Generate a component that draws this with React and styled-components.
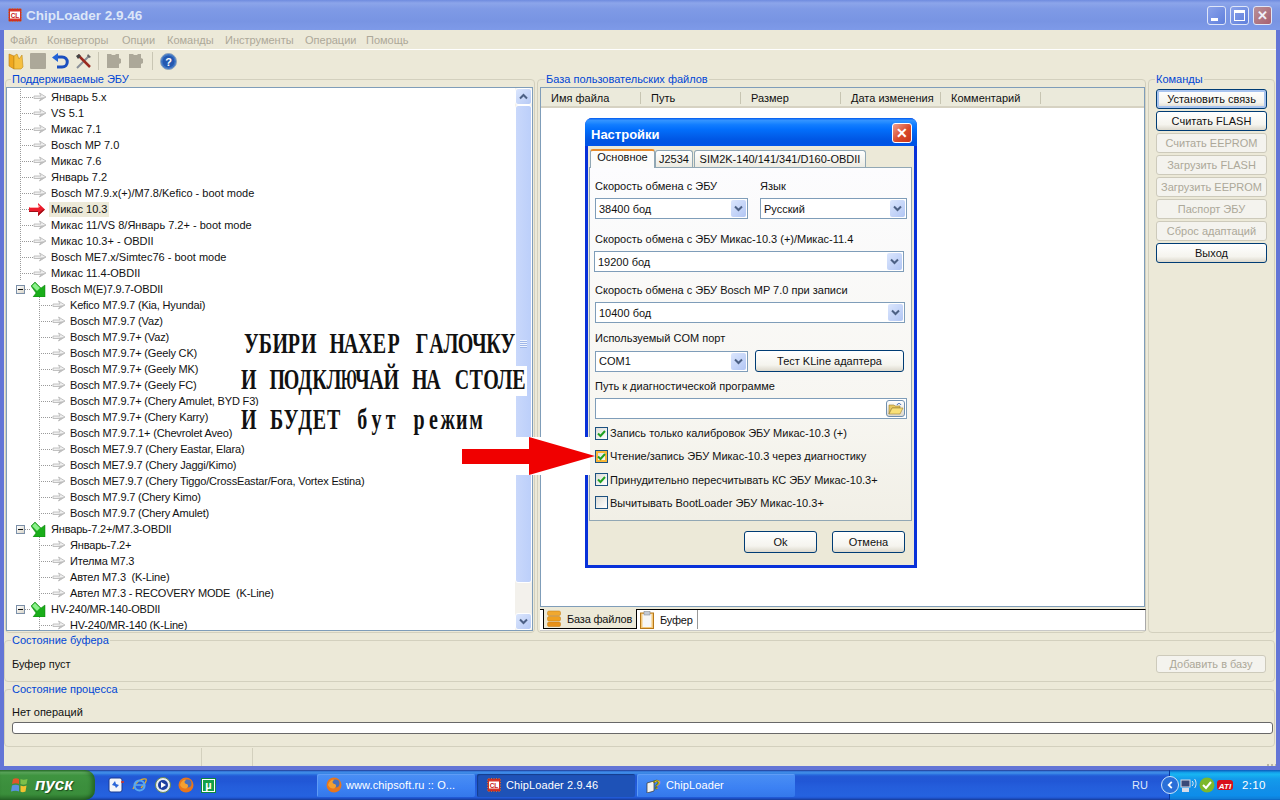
import React from "react";
import styled, { createGlobalStyle } from "styled-components";

const FONT = `"Liberation Sans", Arial, sans-serif`;

const TREE = [
  { t: "Январь 5.x" },
  { t: "VS 5.1" },
  { t: "Микас 7.1" },
  { t: "Bosch MP 7.0" },
  { t: "Микас 7.6" },
  { t: "Январь 7.2" },
  { t: "Bosch M7.9.x(+)/M7.8/Kefico - boot mode" },
  { t: "Микас 10.3", selected: true },
  { t: "Микас 11/VS 8/Январь 7.2+ - boot mode" },
  { t: "Микас 10.3+ - OBDII" },
  { t: "Bosch ME7.x/Simtec76 - boot mode" },
  { t: "Микас 11.4-OBDII" },
  { t: "Bosch M(E)7.9.7-OBDII", group: true },
  { t: "Kefico M7.9.7 (Kia, Hyundai)", child: true },
  { t: "Bosch M7.9.7 (Vaz)", child: true },
  { t: "Bosch M7.9.7+ (Vaz)", child: true },
  { t: "Bosch M7.9.7+ (Geely CK)", child: true },
  { t: "Bosch M7.9.7+ (Geely MK)", child: true },
  { t: "Bosch M7.9.7+ (Geely FC)", child: true },
  { t: "Bosch M7.9.7+ (Chery Amulet, BYD F3)", child: true },
  { t: "Bosch M7.9.7+ (Chery Karry)", child: true },
  { t: "Bosch M7.9.7.1+ (Chevrolet Aveo)", child: true },
  { t: "Bosch ME7.9.7 (Chery Eastar, Elara)", child: true },
  { t: "Bosch ME7.9.7 (Chery Jaggi/Kimo)", child: true },
  { t: "Bosch ME7.9.7 (Chery Tiggo/CrossEastar/Fora, Vortex Estina)", child: true },
  { t: "Bosch M7.9.7 (Chery Kimo)", child: true },
  { t: "Bosch M7.9.7 (Chery Amulet)", child: true },
  { t: "Январь-7.2+/M7.3-OBDII", group: true },
  { t: "Январь-7.2+", child: true },
  { t: "Ителма M7.3", child: true },
  { t: "Автел M7.3  (K-Line)", child: true },
  { t: "Автел M7.3 - RECOVERY MODE  (K-Line)", child: true },
  { t: "HV-240/MR-140-OBDII", group: true },
  { t: "HV-240/MR-140 (K-Line)", child: true },
];

const MENU = [
  ["Файл", 10],
  ["Конверторы", 47],
  ["Опции", 122],
  ["Команды", 167],
  ["Инструменты", 225],
  ["Операции", 305],
  ["Помощь", 366],
];

const COLUMNS = ["Имя файла", "Путь", "Размер", "Дата изменения", "Комментарий"];

const COMMANDS = [
  ["Установить связь", "default"],
  ["Считать FLASH", "normal"],
  ["Считать EEPROM", "disabled"],
  ["Загрузить FLASH", "disabled"],
  ["Загрузить EEPROM", "disabled"],
  ["Паспорт ЭБУ", "disabled"],
  ["Сброс адаптаций", "disabled"],
  ["Выход", "normal"],
];

const CHECKS = [
  ["Запись только калибровок ЭБУ Микас-10.3 (+)", true],
  ["Чтение/запись ЭБУ Микас-10.3 через диагностику", true, true],
  ["Принудительно пересчитывать КС ЭБУ Микас-10.3+", true],
  ["Вычитывать BootLoader ЭБУ Микас-10.3+", false],
];

const ChipIcon = ({ size = 16 }) => (
  <svg width={size} height={size} viewBox="0 0 16 16">
    <path d="M3 1v14M5.500 1v14M8 1v14M10.500 1v14M13 1v14M1 3h14M1 5.500h14M1 8h14M1 10.500h14M1 13h14" stroke="#e8863a" strokeWidth="1" />
    <rect x="2" y="2" width="12" height="12" fill="#d9362a" stroke="#a52015" strokeWidth="0.5" />
    <rect x="3" y="4.500" width="10" height="7" fill="#fff" />
    <text x="8" y="10.500" textAnchor="middle" fontFamily={FONT} fontWeight="700" fontSize="6.500" fill="#c8201a">CL</text>
  </svg>
);

const FolderTool = () => (
  <svg width="16" height="18" viewBox="0 0 16 18">
    <path d="M1 2l5 2v13l-5-3z" fill="#f0a820" stroke="#b87a10" strokeWidth="0.6" />
    <path d="M6 4l3-2 2 5 3-4 1 12-2 2H6z" fill="#f6c040" stroke="#c08a18" strokeWidth="0.6" />
  </svg>
);

const UndoIcon = () => (
  <svg width="17" height="17" viewBox="0 0 17 17">
    <path d="M5 4h5c7 0 7 10 0 10H5" fill="none" stroke="#1a4fc0" strokeWidth="3" />
    <path d="M6 0L0 4.500 6 9z" fill="#2364d8" />
  </svg>
);

const ToolsIcon = () => (
  <svg width="17" height="17" viewBox="0 0 17 17">
    <path d="M2 15L14 3" stroke="#8a8f98" strokeWidth="2" />
    <path d="M13 1l3 3-2 1-2-2z" fill="#666" />
    <path d="M3 2l12 12" stroke="#9a2a20" strokeWidth="2.500" />
    <path d="M1 3l3-2 2 2-3 3z" fill="#444" />
  </svg>
);

const GrayBlock = ({ notch }) => (
  <svg width="16" height="16" viewBox="0 0 16 16">
    {notch ? (
      <path d="M1 1h4l1 1h3l1-1h3v4l2 1v4l-2 1v4H1z" fill="#aca899" />
    ) : (
      <rect x="0" y="0" width="16" height="16" rx="1" fill="#aca899" />
    )}
  </svg>
);

const HelpIcon = () => (
  <svg width="17" height="17" viewBox="0 0 17 17">
    <circle cx="8.500" cy="8.500" r="8" fill="#3e76c6" stroke="#8fa4bd" />
    <circle cx="8.500" cy="8.500" r="6" fill="#2458b0" />
    <text x="8.500" y="12.500" textAnchor="middle" fontFamily={FONT} fontWeight="700" fontSize="11" fill="#fff">?</text>
  </svg>
);

const NodeArrow = () => (
  <svg width="15" height="12" viewBox="0 0 15 12">
    <path d="M1 5h7L6.500 2 13 6l-6.500 4L8 7.500H1z" fill="#f0f0f0" stroke="#b4b4b4" strokeWidth="0.8" />
    <path d="M1 7.500h7L6.500 10 13 6z" fill="#bdbdbd" />
  </svg>
);

const RedArrow = () => (
  <svg width="16" height="13" viewBox="0 0 16 13">
    <path d="M0 4h9V0l7 6.500L9 13V9H0z" fill="#ec1c2c" />
    <path d="M0 4h9V1.500L11 3.500 9 5H1z" fill="#ffb0b0" />
    <path d="M0 9h9v4l7-6.500-2 0L9 10.500V8H0z" fill="#a01018" />
  </svg>
);

const GreenArrow = () => (
  <svg width="15" height="15" viewBox="0 0 15 15">
    <path d="M0 4l4-4 6 6 4-3v12H2l3-4z" fill="#19ad19" stroke="#0c7a0c" strokeWidth="0.5" />
    <path d="M1 4l3-3 5 5-3 3z" fill="#8cf08c" />
  </svg>
);

const Chevron = ({ up, color = "#4d6185", size = 9 }) => (
  <svg width={size} height={size} viewBox="0 0 9 9">
    <path d={up ? "M1 6.500l3.500-3.500L8 6.500" : "M1 2.500L4.500 6 8 2.500"} fill="none" stroke={color} strokeWidth="2" />
  </svg>
);

const DbIcon = () => (
  <svg width="14" height="18" viewBox="0 0 14 18">
    <rect x="0.500" y="1" width="13" height="4.500" rx="1.500" fill="#f0a830" stroke="#c07810" strokeWidth="0.5" />
    <rect x="0.500" y="6.500" width="13" height="4.500" rx="1.500" fill="#f0a020" stroke="#c07810" strokeWidth="0.5" />
    <rect x="0.500" y="12" width="13" height="4.500" rx="1.500" fill="#e89018" stroke="#c07810" strokeWidth="0.5" />
  </svg>
);

const ClipIcon = () => (
  <svg width="14" height="18" viewBox="0 0 14 18">
    <rect x="0.500" y="2" width="13" height="15.500" fill="#f4c878" stroke="#b87818" />
    <rect x="2.500" y="3" width="9" height="13" fill="#f6f6f6" />
    <rect x="4" y="0.500" width="6" height="3.500" fill="#c4cad4" stroke="#7a808a" strokeWidth="0.5" />
  </svg>
);

const FolderOpen = () => (
  <svg width="16" height="14" viewBox="0 0 16 14">
    <path d="M1 3h5l1 1h5v2H4L1 12z" fill="#e8c860" stroke="#9a8030" strokeWidth="0.6" />
    <path d="M1 12l3-6h11l-3 6z" fill="#f8e078" stroke="#9a8030" strokeWidth="0.6" />
    <path d="M9 3c1-2 3-2 4 0" fill="none" stroke="#2458b0" strokeWidth="1" />
  </svg>
);

const CheckMark = () => (
  <svg width="9" height="9" viewBox="0 0 9 9">
    <path d="M1 4.500l2.500 2.500L8 2" fill="none" stroke="#21a121" strokeWidth="2" />
  </svg>
);

const WinFlag = () => (
  <svg width="18" height="18" viewBox="0 0 18 18">
    <path d="M2 3c2-1 4-1 6 0v5C6 7 4 7 1 8z" fill="#e0562a" />
    <path d="M9.500 3c2 1 4 1 7 0l-1 5c-2 1-4 1-6 0z" fill="#7cc04a" />
    <path d="M1 9.500c2-1 5-1 7 0v6c-2-1-5-1-8 0z" fill="#5a92e0" />
    <path d="M9.500 9.500c2 1 4 1 6 0l-1 6c-2 1-4 1-5 0z" fill="#f2c230" />
  </svg>
);

const FoxIcon = () => (
  <svg width="16" height="16" viewBox="0 0 16 16">
    <circle cx="8" cy="8" r="7.500" fill="#e8761c" />
    <circle cx="9.500" cy="6.500" r="4" fill="#4a6fb8" />
    <path d="M2 8c1-4 4-6 6-5-2 1-2 3 0 4 2 0 3 2 1 4-2 1-5 1-7-3z" fill="#f4a030" />
  </svg>
);

const QuickOne = () => (
  <svg width="16" height="16" viewBox="0 0 16 16">
    <rect x="1" y="1" width="13" height="14" rx="2" fill="#f4f6fa" stroke="#1a3a90" />
    <path d="M4 8l3-4 1 3 3 1-3 3-1-2z" fill="#2b66d8" />
    <path d="M13 5h3" stroke="#e03020" strokeWidth="1.500" />
  </svg>
);

const IeIcon = () => (
  <svg width="17" height="16" viewBox="0 0 17 16">
    <path d="M2 12C5 4 11 1 15 2c1 2-2 6-5 9" fill="none" stroke="#e8b020" strokeWidth="1.200" />
    <circle cx="8.500" cy="8.500" r="5" fill="none" stroke="#5aa8f0" strokeWidth="2.200" />
    <path d="M4 8h9" stroke="#5aa8f0" strokeWidth="1.600" />
  </svg>
);

const PlayerIcon = () => (
  <svg width="16" height="16" viewBox="0 0 16 16">
    <circle cx="8" cy="8" r="7.500" fill="#e8ecf4" stroke="#6a8a50" />
    <circle cx="8" cy="8" r="5" fill="#1c3fa0" />
    <path d="M6 5l5 3-5 3z" fill="#fff" />
  </svg>
);

const TorrentIcon = () => (
  <svg width="15" height="15" viewBox="0 0 15 15">
    <rect x="0.500" y="0.500" width="14" height="14" fill="#fff" stroke="#0d8a3c" />
    <rect x="2" y="2" width="11" height="11" fill="#14a049" />
    <text x="7.500" y="11" textAnchor="middle" fontFamily={FONT} fontWeight="700" fontSize="11" fill="#fff">µ</text>
  </svg>
);

const HelpDocIcon = () => (
  <svg width="16" height="16" viewBox="0 0 16 16">
    <path d="M1 6l7-2v10l-7 2z" fill="#f4f4f0" stroke="#333" strokeWidth="0.7" />
    <text x="11" y="12" textAnchor="middle" fontFamily={FONT} fontWeight="700" fontSize="12" fill="#f4d820" stroke="#5a4a00" strokeWidth="0.4">?</text>
  </svg>
);

const NetIcon = () => (
  <svg width="17" height="15" viewBox="0 0 17 15">
    <rect x="1" y="2" width="9" height="7" fill="#3a4a78" stroke="#d8dce8" />
    <rect x="2" y="10" width="7" height="4" fill="#d8dce8" />
    <path d="M12 3c1.500 1 1.500 4 0 5M14.500 1c2 2 2 7 0 9" fill="none" stroke="#e8e8f0" strokeWidth="1" />
  </svg>
);

const ShieldIcon = () => (
  <svg width="16" height="16" viewBox="0 0 16 16">
    <ellipse cx="8" cy="8" rx="7.500" ry="7.500" fill="#7cb82c" />
    <path d="M4 8l3 3 5-6" fill="none" stroke="#fff" strokeWidth="2" />
  </svg>
);

const AtiIcon = () => (
  <svg width="16" height="12" viewBox="0 0 16 12">
    <rect x="0" y="1" width="16" height="10" rx="3" fill="#d8101c" />
    <text x="8" y="9.500" textAnchor="middle" fontFamily={FONT} fontWeight="700" fontStyle="italic" fontSize="8" fill="#fff">ATI</text>
  </svg>
);

const Combo = ({ width, value, shift }) => (
  <ComboBox $width={width} $shift={shift}>
    <span>{value}</span>
    <ComboArrow><Chevron /></ComboArrow>
  </ComboBox>
);

const WIDE_LETTERS = "ЮЖШЩМ";

// the note on the screenshot is typewriter lettering, so every letter gets a cell of its own
const NoteWords = ({ text }) => (
  <NoteText aria-label={text}>
    {[...text].map((ch, i) => (
      <NoteCell key={i}>
        <NoteGlyph $wide={WIDE_LETTERS.includes(ch)}>{ch}</NoteGlyph>
      </NoteCell>
    ))}
  </NoteText>
);

export default function App() {
  return (
    <Page>
      <GlobalStyle />
      <AppWindow>
        <TitleBar>
          <TitleLeft>
            <ChipIcon />
            <TitleText>ChipLoader 2.9.46</TitleText>
          </TitleLeft>
          <WinButtons>
            <WinButton><MinGlyph /></WinButton>
            <WinButton><MaxGlyph /></WinButton>
            <WinButton $close>✕</WinButton>
          </WinButtons>
        </TitleBar>
        <Frame>
          <MenuBar>
            {MENU.map(([name, x]) => (
              <MenuItem key={name} $x={x}>{name}</MenuItem>
            ))}
          </MenuBar>
          <ToolBar>
            <FolderTool />
            <GrayBlock />
            <UndoIcon />
            <ToolsIcon />
            <ToolSep />
            <GrayBlock notch />
            <GrayBlock notch />
            <ToolSep $left={2} />
            <HelpIcon />
          </ToolBar>
          <TopRow>
            <Group $width={530}>
              <GroupTitle $left={5}>Поддерживаемые ЭБУ</GroupTitle>
              <TreeBox>
                <TreeList>
                  {TREE.map((node) => (
                    <TreeRow key={node.t} $child={node.child} $group={node.group}>
                      {node.group ? (
                        <>
                          <Expander />
                          <GroupDots />
                          <GreenArrow />
                        </>
                      ) : (
                        <>
                          <Branch $short={node.selected} />
                          <RowIcon $selected={node.selected}>{node.selected ? <RedArrow /> : <NodeArrow />}</RowIcon>
                        </>
                      )}
                      <RowLabel $selected={node.selected} $tight={node.child || node.group}>{node.t}</RowLabel>
                    </TreeRow>
                  ))}
                </TreeList>
                <ScrollBar>
                  <ScrollButton><Chevron up /></ScrollButton>
                  <ScrollThumb><Grip /></ScrollThumb>
                  <ScrollTrack />
                  <ScrollButton><Chevron /></ScrollButton>
                </ScrollBar>
              </TreeBox>
            </Group>
            <Group $width={609}>
              <GroupTitle $left={7}>База пользовательских файлов</GroupTitle>
              <ListBox>
                <ListHeader>
                  {COLUMNS.map((c) => (
                    <ColumnHead key={c}>{c}</ColumnHead>
                  ))}
                  <ColumnRest />
                </ListHeader>
              </ListBox>
              <PageTabs>
                <PageTab $active><DbIcon /><span>База файлов</span></PageTab>
                <PageTab><ClipIcon /><span>Буфер</span></PageTab>
              </PageTabs>
            </Group>
            <Group $width={127}>
              <GroupTitle $left={6}>Команды</GroupTitle>
              <CommandList>
                {COMMANDS.map(([label, kind]) => (
                  <XpButton key={label} $kind={kind} $width={111} $height={20}>{label}</XpButton>
                ))}
              </CommandList>
            </Group>
          </TopRow>
          <WideGroup $height={49}>
            <GroupTitle $left={6}>Состояние буфера</GroupTitle>
            <BufferRow>
              <span>Буфер пуст</span>
              <XpButton $kind="disabled" $width={110} $height={18}>Добавить в базу</XpButton>
            </BufferRow>
          </WideGroup>
          <WideGroup $height={65}>
            <GroupTitle $left={6}>Состояние процесса</GroupTitle>
            <ProcessLabel>Нет операций</ProcessLabel>
            <Progress />
          </WideGroup>
          <StatusBar>
            <StatusCell $width={198} />
            <StatusCell $width={51} />
            <StatusFill />
            <SizeGrip />
          </StatusBar>
        </Frame>
      </AppWindow>

      <Taskbar>
        <StartButton>
          <WinFlag />
          <StartText>пуск</StartText>
        </StartButton>
        <QuickLaunch>
          <QuickOne />
          <IeIcon />
          <PlayerIcon />
          <FoxIcon />
          <TorrentIcon />
        </QuickLaunch>
        <TaskButtons>
          <TaskButton><FoxIcon /><TaskText>www.chipsoft.ru :: О...</TaskText></TaskButton>
          <TaskButton $active><ChipIcon /><TaskText>ChipLoader 2.9.46</TaskText></TaskButton>
          <TaskButton><HelpDocIcon /><TaskText>ChipLoader</TaskText></TaskButton>
        </TaskButtons>
        <LangLabel>RU</LangLabel>
        <Tray>
          <TrayChevron><Chevron color="#fff" size={8} /></TrayChevron>
          <NetIcon />
          <ShieldIcon />
          <AtiIcon />
          <Clock>2:10</Clock>
        </Tray>
      </Taskbar>

      <Dialog>
        <DialogTitle>
          <DialogCaption>Настройки</DialogCaption>
          <DialogClose>✕</DialogClose>
        </DialogTitle>
        <DialogBody>
          <DialogTabs>
            <DialogTab $active $width={65}>Основное</DialogTab>
            <DialogTab $width={38}>J2534</DialogTab>
            <DialogTab $width={172}>SIM2K-140/141/341/D160-OBDII</DialogTab>
          </DialogTabs>
          <TabPanel>
            <TwoCols>
              <div>
                <FieldLabel>Скорость обмена с ЭБУ</FieldLabel>
                <Combo width={153} value="38400 бод" />
              </div>
              <div>
                <FieldLabel>Язык</FieldLabel>
                <Combo width={147} value="Русский" />
              </div>
            </TwoCols>
            <FieldLabel $top={13}>Скорость обмена с ЭБУ Микас-10.3 (+)/Микас-11.4</FieldLabel>
            <Combo width={310} value="19200 бод" shift={-1} />
            <FieldLabel $top={11}>Скорость обмена с ЭБУ Bosch MP 7.0 при записи</FieldLabel>
            <Combo width={310} value="10400 бод" />
            <FieldLabel $top={8}>Используемый COM порт</FieldLabel>
            <ComRow>
              <Combo width={153} value="COM1" />
              <XpButton $kind="normal" $width={149} $height={22}>Тест KLine адаптера</XpButton>
            </ComRow>
            <FieldLabel $top={7}>Путь к диагностической программе</FieldLabel>
            <PathEdit>
              <PathButton><FolderOpen /></PathButton>
            </PathEdit>
            <CheckList>
              {CHECKS.map(([label, on, hot]) => (
                <CheckRow key={label}>
                  <CheckBox $hot={hot}>{on && <CheckMark />}</CheckBox>
                  {label}
                </CheckRow>
              ))}
            </CheckList>
          </TabPanel>
          <DialogFooter>
            <XpButton $kind="normal" $width={73} $height={22}>Ok</XpButton>
            <XpButton $kind="normal" $width={73} $height={22}>Отмена</XpButton>
          </DialogFooter>
        </DialogBody>
      </Dialog>

      <Note>
        <NoteLine $left={3} $height={30}><NoteWords text="УБИРИ НАХЕР ГАЛОЧКУ" /></NoteLine>
        <NoteLine $left={0} $height={30} $top={6}><NoteWords text="И ПОДКЛЮЧАЙ НА СТОЛЕ" /></NoteLine>
        <NoteLine $left={0} $height={28} $top={10}><NoteWords text="И БУДЕТ бут режим" /></NoteLine>
      </Note>

      <BigArrow>
        <svg width="133" height="38" viewBox="0 0 133 38">
          <path d="M0 12h67V0l66 19-66 19V27H0z" fill="#f00000" />
        </svg>
      </BigArrow>
    </Page>
  );
}

const GlobalStyle = createGlobalStyle`
  html, body {
    margin: 0;
    padding: 0;
    background: #fff;
  }
  * { box-sizing: border-box; }
`;

const Page = styled.div`
  position: relative;
  width: 1280px;
  height: 800px;
  overflow: hidden;
  display: flex;
  flex-direction: column;
  font: 11px/14px ${FONT};
  color: #111;
  background: #ece9d8;
`;

const AppWindow = styled.div`
  height: 770px;
  display: flex;
  flex-direction: column;
`;

const TitleBar = styled.div`
  height: 30px;
  flex: none;
  display: flex;
  align-items: center;
  justify-content: space-between;
  padding: 0 8px 0 7px;
  background: linear-gradient(#6f8bdf 0, #8ca5ea 10%, #7f9ae6 30%, #7894e3 70%, #7e9ae8 100%);
`;

const TitleLeft = styled.div`
  display: flex;
  align-items: center;
  gap: 3px;
`;

const TitleText = styled.span`
  font: bold 13.500px ${FONT};
  color: #dce6f8;
`;

const WinButtons = styled.div`
  display: flex;
  gap: 4px;
`;

const WinButton = styled.div`
  width: 19px;
  height: 19px;
  display: flex;
  align-items: center;
  justify-content: center;
  border: 1px solid #dfe6f8;
  border-radius: 3px;
  color: #f0f0f8;
  font: bold 13px ${FONT};
  background: ${(p) => (p.$close ? "linear-gradient(135deg, #b89098, #a86070)" : "linear-gradient(135deg, #8aa2ea, #5f7fdc)")};
`;

const MinGlyph = styled.span`
  width: 7px;
  height: 3px;
  margin: 8px 5px 0 0;
  background: #fff;
`;

const MaxGlyph = styled.span`
  width: 11px;
  height: 11px;
  border: 1px solid #fff;
  border-top-width: 3px;
`;

const Frame = styled.div`
  flex: 1;
  min-height: 0;
  display: flex;
  flex-direction: column;
  border: solid #6375d6;
  border-width: 0 4px 4px;
`;

const MenuBar = styled.div`
  height: 20px;
  flex: none;
  display: flex;
  align-items: center;
  border-bottom: 1px solid #fff;
`;

const MenuItem = styled.span`
  position: absolute;
  left: ${(p) => p.$x}px;
  color: #aca899;
`;

const ToolBar = styled.div`
  height: 22px;
  flex: none;
  display: flex;
  align-items: center;
  gap: 6px;
  padding-left: 4px;
`;

const ToolSep = styled.span`
  width: 1px;
  height: 18px;
  margin: 0 1px 0 ${(p) => p.$left || 0}px;
  background: #c9c6b4;
`;

const TopRow = styled.div`
  height: 561px;
  flex: none;
  display: flex;
  gap: 2px;
  padding-left: 1px;
`;

const Group = styled.fieldset`
  width: ${(p) => p.$width}px;
  height: 100%;
  min-width: 0;
  flex: none;
  margin: 0;
  padding: 0;
  border: 1px solid #d3d0be;
  border-radius: 4px;
`;

const GroupTitle = styled.legend`
  margin-left: ${(p) => p.$left}px;
  padding: 0 1px;
  height: 14px;
  line-height: 14px;
  color: #0046d5;
`;

const TreeBox = styled.div`
  margin-top: 1px;
  height: 544px;
  width: 527px;
  display: flex;
  border: 1px solid #7f9db9;
  background: #fff;
`;

const TreeList = styled.div`
  flex: 1;
  min-width: 0;
  padding-top: 1px;
  overflow: hidden;
`;

const TreeRow = styled.div`
  height: 16px;
  display: flex;
  align-items: center;
  white-space: pre;
  padding-left: ${(p) => (p.$group ? 9 : p.$child ? 32 : 13)}px;
`;

const Branch = styled.span`
  width: ${(p) => (p.$short ? 10 : 14)}px;
  height: 16px;
  flex: none;
  background:
    repeating-linear-gradient(to bottom, #9a9a9a 0 1px, transparent 1px 2px) 0 0 / 1px 100% no-repeat,
    repeating-linear-gradient(to right, #9a9a9a 0 1px, transparent 1px 2px) 0 8px / 100% 1px no-repeat;
`;

const RowIcon = styled.span`
  width: ${(p) => (p.$selected ? 16 : 15)}px;
  flex: none;
  display: flex;
  align-items: center;
  margin-left: -1px;
  margin-right: ${(p) => (p.$selected ? 6 : 3)}px;
`;

const RowLabel = styled.span`
  padding: 0 2px;
  margin-left: -2px;
  line-height: 15px;
  letter-spacing: ${(p) => (p.$tight ? "-0.17px" : "0")};
  background: ${(p) => (p.$selected ? "#ece9d8" : "transparent")};
`;

const Expander = styled.span`
  position: relative;
  width: 9px;
  height: 9px;
  flex: none;
  border: 1px solid #7b8fa8;
  background: linear-gradient(135deg, #fff, #d8d4c8);
  &::after {
    content: "";
    position: absolute;
    left: 1px;
    top: 3px;
    width: 5px;
    height: 1px;
    background: #111;
  }
`;

const GroupDots = styled.span`
  width: 6px;
  height: 1px;
  flex: none;
  background: repeating-linear-gradient(to right, #9a9a9a 0 1px, transparent 1px 2px);
  & + svg {
    margin-right: 5px;
    flex: none;
  }
`;

const ScrollBar = styled.div`
  width: 17px;
  flex: none;
  display: flex;
  flex-direction: column;
  background: #f3f1ec;
`;

const ScrollButton = styled.div`
  height: 17px;
  flex: none;
  display: flex;
  align-items: center;
  justify-content: center;
  border: 1px solid #fff;
  border-radius: 3px;
  background: linear-gradient(135deg, #dbe6fd, #b7caf5);
`;

const ScrollThumb = styled.div`
  height: 478px;
  flex: none;
  display: flex;
  align-items: center;
  justify-content: center;
  border: 1px solid #fff;
  border-radius: 3px;
  background: linear-gradient(to right, #c9d8fb, #bccffa);
`;

const Grip = styled.span`
  width: 7px;
  height: 8px;
  background: repeating-linear-gradient(to bottom, #eef3fe 0 1px, #9fb6e8 1px 2px);
`;

const ScrollTrack = styled.div`
  flex: 1;
`;

const ListBox = styled.div`
  margin: 1px 0 0 2px;
  width: 605px;
  height: 520px;
  border: 1px solid #7f9db9;
  background: #fff;
`;

const ListHeader = styled.div`
  height: 20px;
  display: flex;
  background: #ebeadb;
  border-bottom: 2px solid #d6d2c2;
`;

const ColumnHead = styled.div`
  width: 100px;
  flex: none;
  padding: 3px 0 0 10px;
  line-height: 15px;
  white-space: nowrap;
  background: linear-gradient(#c7c5b2, #c7c5b2) right 0 top 4px / 1px 12px no-repeat;
`;

const ColumnRest = styled.div`
  flex: 1;
`;

const PageTabs = styled.div`
  margin: 2px 0 0 2px;
  width: 606px;
  height: 22px;
  display: flex;
  background: #fff;
  border-top: 1px solid #000;
  border-right: 1px solid #a9a9a9;
  border-bottom: 1px solid #c8c8c8;
  padding-left: 3px;
`;

const PageTab = styled.div`
  height: ${(p) => (p.$active ? 20 : 19)}px;
  padding: 0 4px 0 3px;
  display: flex;
  align-items: center;
  gap: 6px;
  letter-spacing: -0.2px;
  margin-top: ${(p) => (p.$active ? -1 : 0)}px;
  background: ${(p) => (p.$active ? "#ece9d8" : "#fff")};
  border-left: ${(p) => (p.$active ? "1px solid #000" : "0")};
  border-right: 1px solid ${(p) => (p.$active ? "#000" : "#9a9a9a")};
  border-bottom: ${(p) => (p.$active ? "1px solid #000" : "0")};
`;

const CommandList = styled.div`
  margin-top: 3px;
  padding-left: 7px;
  display: flex;
  flex-direction: column;
  gap: 2px;
`;

const XpButton = styled.div`
  width: ${(p) => p.$width}px;
  height: ${(p) => p.$height}px;
  flex: none;
  display: flex;
  align-items: center;
  justify-content: center;
  border-radius: 3px;
  white-space: nowrap;
  border: 1px solid ${(p) => (p.$kind === "disabled" ? "#cdcabb" : "#003c74")};
  color: ${(p) => (p.$kind === "disabled" ? "#aca899" : "#111")};
  background: ${(p) => (p.$kind === "disabled" ? "#f4f3ee" : "linear-gradient(#fff, #f5f4ee 70%, #dcd8cc)")};
  box-shadow: ${(p) => (p.$kind === "default" ? "inset 0 0 0 2px #a9c4ef" : "none")};
`;

const WideGroup = styled.fieldset`
  height: ${(p) => p.$height}px;
  flex: none;
  min-width: 0;
  margin: 0 1px 0 0;
  padding: 0;
  border: 1px solid #d3d0be;
  border-radius: 4px;
`;

const BufferRow = styled.div`
  margin-top: 8px;
  height: 18px;
  display: flex;
  align-items: center;
  justify-content: space-between;
  padding: 0 8px 0 7px;
`;

const ProcessLabel = styled.div`
  margin: 9px 0 0 7px;
`;

const Progress = styled.div`
  height: 12px;
  margin: 3px 1px 0 7px;
  border: 1px solid #686868;
  border-radius: 3px;
  background: #fff;
`;

const StatusBar = styled.div`
  height: 18px;
  margin-top: 1px;
  flex: none;
  display: flex;
`;

const StatusCell = styled.div`
  width: ${(p) => p.$width}px;
  border-right: 1px solid #d3d0be;
`;

const StatusFill = styled.div`
  flex: 1;
`;

const SizeGrip = styled.div`
  width: 9px;
  background: repeating-linear-gradient(to right, #b8b5a4 0 2px, transparent 2px 4px) bottom / 100% 2px no-repeat;
`;

const Taskbar = styled.div`
  height: 30px;
  flex: none;
  display: flex;
  align-items: center;
  background: linear-gradient(#1f2f86 0, #3165c4 3%, #3682e5 6%, #4490e6 10%, #3883e5 12%, #2b71e0 15%, #2663da 18%, #235bd6 20%, #2258d5 23%, #2157d6 38%, #245ddb 54%, #2562df 86%, #245fdc 89%, #2158d4 92%, #1d4ec0 95%, #1941a5 98%);
`;

const StartButton = styled.div`
  width: 95px;
  height: 30px;
  flex: none;
  display: flex;
  align-items: center;
  gap: 6px;
  padding-left: 11px;
  border-radius: 0 10px 10px 0;
  background: linear-gradient(#2f7a31 0, #5ba85c 8%, #3f9440 18%, #3c8f3d 50%, #3a8e3b 80%, #2a6e2c 100%);
  box-shadow: inset -3px 0 4px rgba(0, 40, 0, 0.4);
`;

const StartText = styled.span`
  font: italic bold 17px ${FONT};
  color: #fff;
  text-shadow: 1px 1px 1px #1c4a1c;
`;

const QuickLaunch = styled.div`
  width: 222px;
  flex: none;
  display: flex;
  align-items: center;
  gap: 7px;
  padding-left: 13px;
`;

const TaskButtons = styled.div`
  display: flex;
  gap: 2px;
`;

const TaskButton = styled.div`
  width: 158px;
  height: 23px;
  display: flex;
  align-items: center;
  gap: 4px;
  padding-left: 9px;
  border-radius: 2px;
  color: #fff;
  background: ${(p) => (p.$active ? "#1e52b7" : "linear-gradient(#4a8ff4, #3c81f3 60%, #3478ea)")};
  box-shadow: ${(p) => (p.$active ? "inset 1px 1px 1px #153d8c" : "inset 1px 1px 0 #5f9cf6")};
  & svg {
    flex: none;
  }
`;

const TaskText = styled.span`
  font: 11px/16px ${FONT};
  letter-spacing: 0.1px;
  white-space: nowrap;
`;

const LangLabel = styled.span`
  margin-left: auto;
  margin-right: 21px;
  color: #dfe8fa;
  font-size: 11px;
`;

const Tray = styled.div`
  width: 111px;
  height: 30px;
  flex: none;
  display: flex;
  align-items: center;
  gap: 2px;
  border-left: 1px solid #0b3aa0;
  background: linear-gradient(#0c59b9 0, #139ee9 8%, #18b5f2 14%, #139beb 30%, #1290e8 60%, #0d8dea 85%, #0f7fd8 95%, #0963c0 100%);
`;

const TrayChevron = styled.div`
  width: 18px;
  height: 18px;
  flex: none;
  margin: 0 -1px 0 -9px;
  border-radius: 50%;
  display: flex;
  align-items: center;
  justify-content: center;
  border: 1px solid #cde4fa;
  background: #2a6fd8;
  transform: rotate(90deg);
`;

const Clock = styled.span`
  margin-left: 7px;
  color: #fff;
  font-size: 11.500px;
  letter-spacing: 0.3px;
`;

const Dialog = styled.div`
  position: absolute;
  left: 585px;
  top: 118px;
  width: 332px;
  height: 450px;
  display: flex;
  flex-direction: column;
  border-radius: 7px 7px 0 0;
  background: #0831d9;
`;

const DialogTitle = styled.div`
  height: 28px;
  flex: none;
  display: flex;
  align-items: center;
  justify-content: space-between;
  padding: 2px 5px 0 6px;
  border-radius: 7px 7px 0 0;
  color: #fff;
  font: bold 13px ${FONT};
  background: linear-gradient(#0058ee 0, #3593ff 8%, #288eff 14%, #127dff 24%, #036ffc 40%, #0262ee 60%, #0057e5 76%, #0054e3 90%, #0055eb 100%);
`;

const DialogCaption = styled.span`
  position: relative;
  top: 1px;
`;

const DialogClose = styled.div`
  width: 20px;
  height: 20px;
  display: flex;
  align-items: center;
  justify-content: center;
  border: 1px solid #fff;
  border-radius: 3px;
  font-size: 14px;
  background: linear-gradient(135deg, #f0a090, #d84a2a 55%, #c8341c);
`;

const DialogBody = styled.div`
  flex: 1;
  min-height: 0;
  margin: 0 3px 3px;
  display: flex;
  flex-direction: column;
  background: #ece9d8;
  padding: 3px 2px 0 1px;
`;

const DialogTabs = styled.div`
  height: 18px;
  flex: none;
  display: flex;
  align-items: flex-end;
  padding-left: 1px;
`;

const DialogTab = styled.div`
  width: ${(p) => p.$width}px;
  height: ${(p) => (p.$active ? 19 : 17)}px;
  flex: none;
  text-align: center;
  white-space: nowrap;
  line-height: ${(p) => (p.$active ? 13 : 16)}px;
  border: 1px solid #91a7b4;
  border-bottom: 0;
  border-radius: 3px 3px 0 0;
  margin-right: ${(p) => (p.$active ? 0 : 1)}px;
  position: relative;
  z-index: ${(p) => (p.$active ? 1 : 0)};
  margin-bottom: ${(p) => (p.$active ? -1 : 0)}px;
  background: ${(p) => (p.$active ? "#fcfcfb" : "linear-gradient(#fff, #ecebe2)")};
  border-top: ${(p) => (p.$active ? "2px solid #e68b2c" : "1px solid #91a7b4")};
`;

const TabPanel = styled.div`
  height: 354px;
  flex: none;
  padding: 11px 0 0 5px;
  border: 1px solid #91a7b4;
  background: linear-gradient(#fcfcfe 0, #f7f6f1 70%, #f1efe6 100%);
`;

const TwoCols = styled.div`
  display: flex;
  gap: 12px;
`;

const FieldLabel = styled.div`
  height: 14px;
  margin-top: ${(p) => p.$top || 0}px;
  margin-bottom: 5px;
  white-space: nowrap;
`;

const ComboBox = styled.div`
  width: ${(p) => p.$width}px;
  height: 21px;
  margin-left: ${(p) => p.$shift || 0}px;
  flex: none;
  display: flex;
  align-items: center;
  justify-content: space-between;
  padding: 0 1px 0 3px;
  border: 1px solid #7f9db9;
  background: #fff;
`;

const ComboArrow = styled.div`
  width: 15px;
  height: 17px;
  display: flex;
  align-items: center;
  justify-content: center;
  border-radius: 2px;
  background: linear-gradient(135deg, #dbe6fd, #b2c6f4);
`;

const ComRow = styled.div`
  display: flex;
  align-items: center;
  gap: 7px;
`;

const PathEdit = styled.div`
  width: 312px;
  height: 21px;
  display: flex;
  align-items: center;
  justify-content: flex-end;
  padding-right: 1px;
  border: 1px solid #7f9db9;
  background: #fff;
`;

const PathButton = styled.div`
  width: 19px;
  height: 17px;
  display: flex;
  align-items: center;
  justify-content: center;
  border: 1px solid #6f8fb0;
  border-radius: 3px;
  background: linear-gradient(#fff, #dcd8cc);
`;

const CheckList = styled.div`
  margin-top: 6px;
  display: flex;
  flex-direction: column;
  gap: 7.300px;
`;

const CheckRow = styled.div`
  height: 16px;
  display: flex;
  align-items: center;
  gap: 2px;
  white-space: nowrap;
`;

const CheckBox = styled.span`
  width: 13px;
  height: 13px;
  flex: none;
  display: flex;
  align-items: center;
  justify-content: center;
  border: 1px solid #1c5180;
  background: linear-gradient(135deg, #dcdcd7, #fff);
  box-shadow: ${(p) => (p.$hot ? "inset 0 0 0 2px #f8b636" : "none")};
`;

const DialogFooter = styled.div`
  display: flex;
  justify-content: flex-end;
  gap: 15px;
  padding: 10px 7px 0 0;
`;

const Note = styled.div`
  position: absolute;
  left: 238px;
  top: 330px;
`;

const NoteLine = styled.div`
  width: fit-content;
  height: ${(p) => p.$height}px;
  margin-top: ${(p) => p.$top || 0}px;
  margin-left: ${(p) => p.$left}px;
  padding: 0 1px 0 3px;
  background: #fff;
`;

const NoteText = styled.span`
  display: block;
  white-space: pre;
  font: bold 20px/30px "Liberation Serif", "Times New Roman", serif;
  color: #111;
  transform: translateY(-2.500px) scaleY(1.5);
`;

const NoteCell = styled.span`
  display: inline-block;
  width: 14.250px;
  text-align: center;
`;

const NoteGlyph = styled.span`
  display: inline-block;
  transform: scaleX(${(p) => (p.$wide ? 0.7 : 1)});
  width: ${(p) => (p.$wide ? "14px" : "auto")};
  margin-left: ${(p) => (p.$wide ? "-3px" : "0")};
`;

const BigArrow = styled.div`
  position: absolute;
  left: 462px;
  top: 437px;
  width: 128px;
  height: 38px;
  background: #fff;
  & svg {
    display: block;
  }
`;
